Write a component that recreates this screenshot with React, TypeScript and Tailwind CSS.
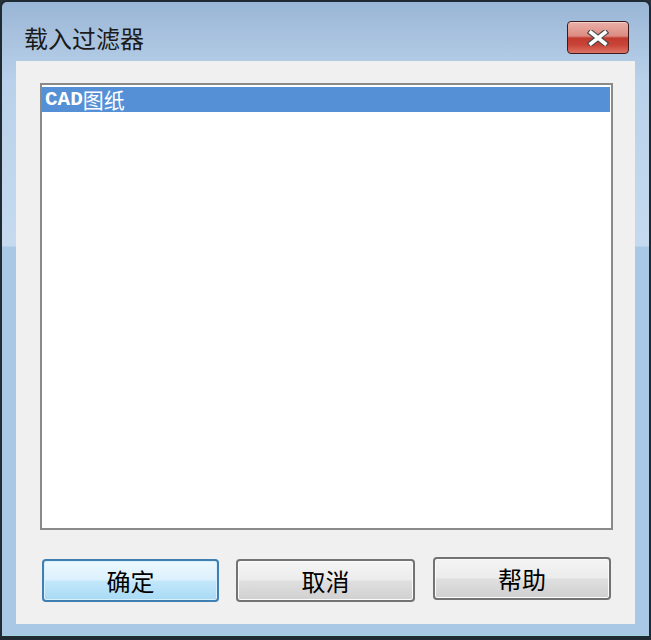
import React from "react";

const cjk = '"Noto Sans CJK SC", "Noto Sans", sans-serif';

export default function App() {
  return (
    <div className="w-[651px] h-[640px] bg-[#27313a]">
      <div className="w-[651px] h-[640px] rounded-t-[7px] border-t-2 border-l-2 border-r-2 border-b-4 border-[#1f2a33] bg-[#222]">
        <div className="h-full flex flex-col rounded-t-[5px] border-b border-[#9fd6de] bg-[linear-gradient(to_bottom,#9ab6d6_0px,#aac4e0_40px,#b9d1ea_80px,#c5daef_244px,#a9c8e6_245px,#a9c8e6_100%)]">
          {/* Title bar */}
          <div className="h-[59px] flex items-start justify-between shrink-0">
            <div
              className="ml-[22px] mt-[23px] text-[24px] leading-[26px] text-[#1b1b1b]"
              style={{ fontFamily: cjk }}
            >
              载入过滤器
            </div>
            <div className="mt-[19px] mr-[20px] w-[62px] h-[33px] rounded-[4px] border border-[#3a1c1f] bg-[linear-gradient(to_bottom,#eab0a8_0%,#dc8c82_45%,#c23a2e_52%,#c94538_75%,#dc7466_100%)] flex items-center justify-center shadow-[inset_0_1px_0_#f4cfc9]">
              <svg width="22" height="16" viewBox="0 0 22 16">
                <path d="M4 2.5 L18 13.5 M18 2.5 L4 13.5" stroke="#4a4a4a" strokeWidth="6" strokeLinecap="square" fill="none" />
                <path d="M4 2.5 L18 13.5 M18 2.5 L4 13.5" stroke="#ffffff" strokeWidth="3.6" strokeLinecap="square" fill="none" />
              </svg>
            </div>
          </div>
          {/* Content panel */}
          <div className="mx-[14px] mb-[11px] flex-1 bg-[#f0f0f0] flex flex-col">
            <div className="ml-[24px] mt-[22px] w-[573px] h-[447px] border-2 border-[#8a8a8a] bg-white pt-[2px] pr-[1px]">
              <div className="h-[25px] bg-[#5590d6] text-white pl-[3px] text-[21px] leading-[25px] whitespace-nowrap flex items-center">
                <span
                  className="font-bold"
                  style={{ fontFamily: '"Liberation Mono", "DejaVu Sans Mono", monospace' }}
                >
                  CAD
                </span>
                <span style={{ fontFamily: cjk }}>图纸</span>
              </div>
            </div>
            <div className="mt-[27px] flex items-start" style={{ fontFamily: cjk }}>
              <div className="ml-[26px] mt-[2px] w-[177px] h-[43px] rounded-[4px] border-2 border-[#3f7fb2] bg-[linear-gradient(to_bottom,#edf8fe_0%,#dcf1fd_48%,#c2e7fb_52%,#a8daf4_100%)] shadow-[inset_0_0_0_1px_#d8f0fc] flex items-center justify-center text-[24px] text-black">
                确定
              </div>
              <div className="ml-[17px] mt-[2px] w-[179px] h-[43px] rounded-[4px] border-2 border-[#737373] bg-[linear-gradient(to_bottom,#f4f4f4_0%,#ececec_48%,#dfdfdf_52%,#d0d0d0_100%)] shadow-[inset_0_0_0_1px_#fbfbfb] flex items-center justify-center text-[24px] text-black">
                取消
              </div>
              <div className="ml-[18px] w-[178px] h-[43px] rounded-[4px] border-2 border-[#737373] bg-[linear-gradient(to_bottom,#f4f4f4_0%,#ececec_48%,#dfdfdf_52%,#d0d0d0_100%)] shadow-[inset_0_0_0_1px_#fbfbfb] flex items-center justify-center text-[24px] text-black">
                帮助
              </div>
            </div>
          </div>
        </div>
      </div>
    </div>
  );
}
